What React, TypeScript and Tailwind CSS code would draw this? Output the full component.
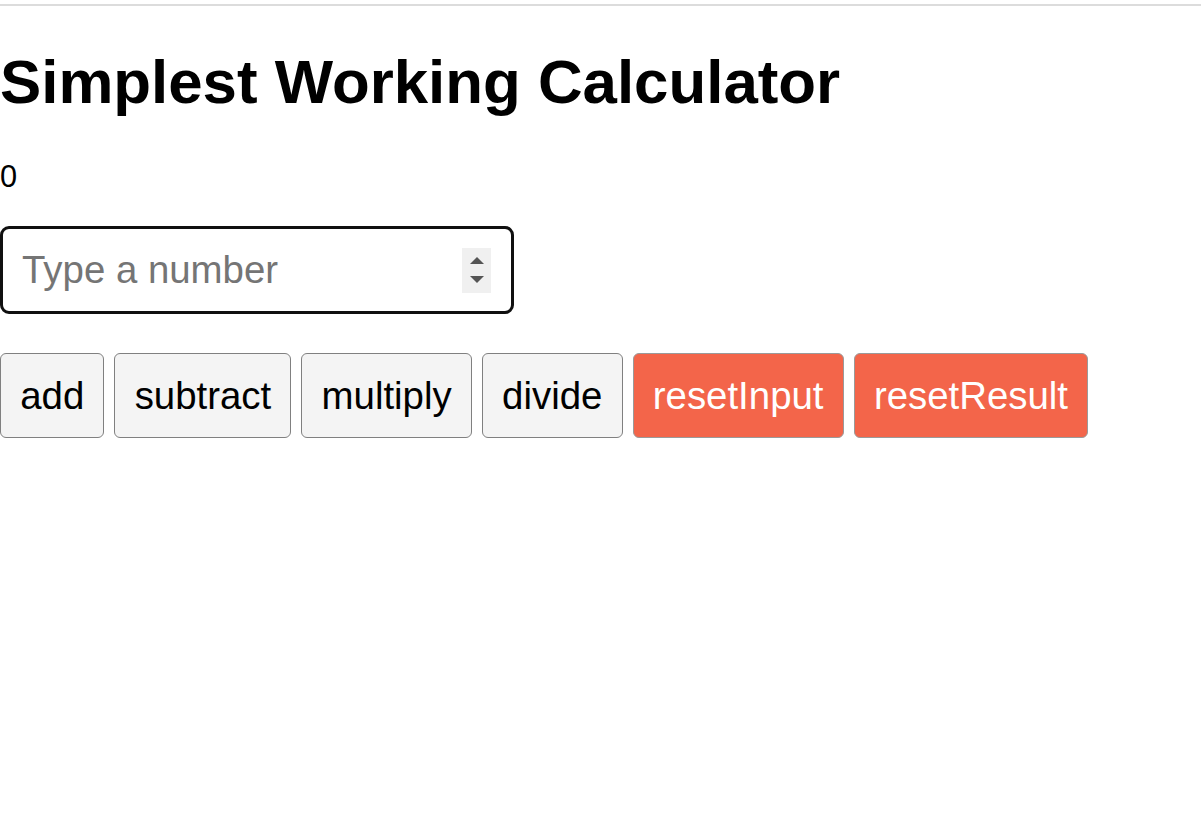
import { useState } from 'react';

const font = "font-['Liberation_Sans',Arial,sans-serif]";

export default function App() {
  const [result, setResult] = useState(0);
  const [value, setValue] = useState('');

  const n = Number(value) || 0;

  const ops = [
    { label: 'add', run: () => setResult((r) => r + n) },
    { label: 'subtract', run: () => setResult((r) => r - n) },
    { label: 'multiply', run: () => setResult((r) => r * n) },
    { label: 'divide', run: () => setResult((r) => r / n) },
  ];

  return (
    <div className={`min-h-screen bg-white text-black ${font}`}>
      <div className="h-[4px]" />
      <div className="h-[2px] bg-[#dcdcdc]" />

      <h1 className="mt-[41px] text-[61.8px] font-bold leading-[69px]">Simplest Working Calculator</h1>

      <p className="mt-[44px] text-[30.72px] leading-[34px]">{result}</p>

      <div className="mt-[32px] flex h-[88px] w-[514px] items-center rounded-[9px] border-[3px] border-[#101010] pl-[19px] pr-[20px]">
        <input
          type="text"
          inputMode="decimal"
          value={value}
          onChange={(e) => setValue(e.target.value)}
          placeholder="Type a number"
          className={`min-w-0 flex-1 bg-transparent text-[38.4px] leading-[44px] outline-none placeholder:text-[#757575] ${font}`}
        />
        <div className="flex h-[45px] w-[29px] flex-col items-center justify-center gap-[12px] bg-[#f0f0f0]">
          <svg width="14" height="7" viewBox="0 0 14 7">
            <path d="M7 0L14 7H0Z" fill="#555" />
          </svg>
          <svg width="14" height="7" viewBox="0 0 14 7">
            <path d="M0 0H14L7 7Z" fill="#555" />
          </svg>
        </div>
      </div>

      <div className="mt-[39px] flex gap-[10px]">
        {ops.map((op) => (
          <button
            key={op.label}
            onClick={op.run}
            className="rounded-[6px] border border-[#808080] bg-[#f4f4f4] px-[19.2px] py-[19.2px] text-[38.4px] leading-[45px] text-black"
          >
            {op.label}
          </button>
        ))}
        <button
          onClick={() => setValue('')}
          className="rounded-[6px] border border-[#9a9a9a] bg-[#f3654a] px-[19.2px] py-[19.2px] text-[38.4px] leading-[45px] text-white"
        >
          resetInput
        </button>
        <button
          onClick={() => setResult(0)}
          className="rounded-[6px] border border-[#9a9a9a] bg-[#f3654a] px-[19.2px] py-[19.2px] text-[38.4px] leading-[45px] text-white"
        >
          resetResult
        </button>
      </div>
    </div>
  );
}
